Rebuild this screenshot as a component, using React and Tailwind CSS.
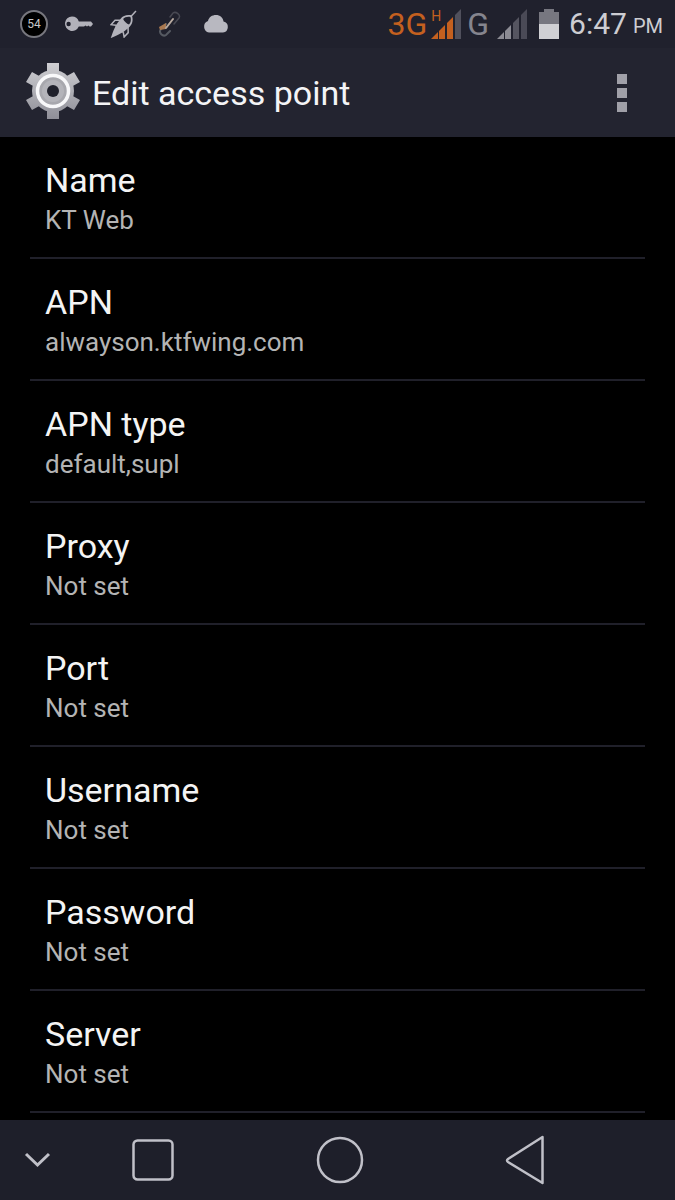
import React from "react";

const settings = [
  { name: "Name", value: "KT Web" },
  { name: "APN", value: "alwayson.ktfwing.com" },
  { name: "APN type", value: "default,supl" },
  { name: "Proxy", value: "Not set" },
  { name: "Port", value: "Not set" },
  { name: "Username", value: "Not set" },
  { name: "Password", value: "Not set" },
  { name: "Server", value: "Not set" },
];

function KeyIcon() {
  return (
    <svg width="30" height="18" viewBox="0 0 30 18" fill="#b2b2ba" aria-hidden="true">
      <path
        fillRule="evenodd"
        d="M8 1.500a7.200 7.200 0 0 1 6.800 5H27l2 2.500-2 2.500h-1.500l-1-1-1.500 1-1.500-1-1.500 1h-5.200A7.200 7.200 0 1 1 8 1.500zM4.600 6.800a2.200 2.200 0 1 0 0 4.400 2.200 2.200 0 0 0 0-4.400z"
      />
    </svg>
  );
}

function RocketIcon() {
  return (
    <svg width="28" height="28" viewBox="0 0 28 28" aria-hidden="true">
      <g transform="translate(13 15) rotate(43)">
        <path d="M0-19v8" stroke="#b2b2ba" strokeWidth="1.500" />
        <path
          fillRule="evenodd"
          fill="#b2b2ba"
          d="M0-13c4 2 6.500 6 6 10L5 6H-5L-6-3C-6.500-7-4-11 0-13zM0-11c-2.500 1.500-4.200 4-4 6.500 2 1 6 1 8 0C4.200-7 2.500-9.500 0-11z"
        />
        <path d="M-5-2l-4 4v6l4-3M5-2l4 4v6L5 5" fill="none" stroke="#b2b2ba" strokeWidth="1.500" />
        <path d="M-5 5H5L3 11 0 18l-3-7z" fill="#b2b2ba" />
      </g>
    </svg>
  );
}

function LinkIcon() {
  return (
    <svg width="24" height="26" viewBox="0 0 24 26" fill="none" strokeLinecap="round" aria-hidden="true">
      <path d="M12 6l3-4c3-2 8 2 6 5l-5 6" stroke="#484953" strokeWidth="1.500" />
      <path d="M8 13l-5 5c-3 4 2 8 5 6l4-4" stroke="#565a62" strokeWidth="2" />
      <path d="M8 12l-7 4 1 3 6-1z" fill="#a87850" />
      <path d="M8 17l7-9" stroke="#b8aaa0" strokeWidth="2" />
    </svg>
  );
}

function CloudIcon() {
  return (
    <svg width="28" height="20" viewBox="0 0 28 20" fill="#b8b8c0" aria-hidden="true">
      <path d="M7 18.500a6 6 0 0 1-1-11.500C7 3 10 1 14 1c4 0 7 2.500 7.500 6.500a5.600 5.600 0 0 1-.500 11z" />
    </svg>
  );
}

function SignalBars({ colors }) {
  return (
    <svg width="30" height="30" viewBox="0 0 30 30" aria-hidden="true">
      <path d="M0 30l7-7v7z" fill={colors[0]} />
      <path d="M8 22l6-6v14H8z" fill={colors[1]} />
      <path d="M16 14l6-6v22h-6z" fill={colors[2]} />
      <path d="M24 6l6-6v30h-6z" fill={colors[3]} />
    </svg>
  );
}

function BatteryIcon() {
  return (
    <svg width="20" height="30" viewBox="0 0 20 30" aria-hidden="true">
      <path d="M5 0h10v3h5v12H0V3h5z" fill="#777780" />
      <path d="M0 15h20v15H0z" fill="#d0d0d4" />
    </svg>
  );
}

function GearIcon() {
  return (
    <svg width="54" height="60" viewBox="-27 -28 54 60" aria-hidden="true">
      <defs>
        <linearGradient id="gear" x1="0" y1="-28" x2="0" y2="28" gradientUnits="userSpaceOnUse">
          <stop offset="0" stopColor="#cfcfd3" />
          <stop offset="1" stopColor="#8f8f98" />
        </linearGradient>
      </defs>
      <g fill="url(#gear)">
        <path d="M-6-28H6V-16H-6zM-6 28H6V16H-6z" />
        <path d="M-21-19l9 5-6 10-9-5zM21-19l-9 5 6 10 9-5z" />
        <path d="M-21 19l9-5-6-10-9 5zM21 19l-9-5 6-10 9 5z" />
        <circle r="21" />
      </g>
      <circle r="15.500" fill="#a8a8ae" stroke="#f8f8fa" strokeWidth="3.500" />
      <circle r="11" fill="#b4b4ba" />
      <circle r="6" fill="#20212c" />
    </svg>
  );
}

function StatusBar() {
  return (
    <div className="h-12 pl-5 pr-3 flex items-center justify-between bg-[#20212d]">
      <div className="flex items-center gap-4">
        <span className="size-7 rounded-full border-2 border-[#77777e] bg-black flex items-center justify-center text-xs text-[#c8c8cc]">
          54
        </span>
        <KeyIcon />
        <RocketIcon />
        <div className="px-1">
          <LinkIcon />
        </div>
        <CloudIcon />
      </div>
      <div className="flex items-center">
        <span className="text-[32px] leading-10 text-[#c4601f]">3G</span>
        <div className="relative pl-1">
          <span className="absolute left-1 top-0 text-sm leading-none text-[#c4601f]">H</span>
          <SignalBars colors={["#c4601f", "#c4601f", "#c4601f", "#50505c"]} />
        </div>
        <span className="pl-1.5 text-[32px] leading-10 text-[#85858e]">G</span>
        <div className="pl-2 pr-3">
          <SignalBars colors={["#8c8c94", "#8c8c94", "#555560", "#4a4a56"]} />
        </div>
        <BatteryIcon />
        <span className="pl-2.5 text-[30px] leading-10 text-[#cdcdd2]">6:47</span>
        <span className="pl-1.5 pt-1 text-xl text-[#cdcdd2]">PM</span>
      </div>
    </div>
  );
}

function ActionBar() {
  return (
    <header className="h-[89px] pl-[26px] pr-10 flex items-center justify-between bg-[#232430]">
      <div className="flex items-center gap-3">
        <GearIcon />
        <h1 className="text-[34px] leading-10 text-[#f4f4f6]">Edit access point</h1>
      </div>
      <button aria-label="More options" className="px-2 flex flex-col gap-1">
        <span className="size-[10px] bg-[#a0a0a8]" />
        <span className="size-[10px] bg-[#a0a0a8]" />
        <span className="size-[10px] bg-[#a0a0a8]" />
      </button>
    </header>
  );
}

function NavBar() {
  return (
    <nav className="mt-auto h-20 pl-6 pr-[130px] flex items-center bg-[#1e1f2a]">
      <button aria-label="Hide">
        <svg width="28" height="20" viewBox="0 0 28 20" fill="none" stroke="#c0c0c8" strokeWidth="3">
          <path d="M2 4l11.500 11L25 4" />
        </svg>
      </button>
      <div className="ml-20 flex-1 flex items-center justify-between">
        <button aria-label="Recent apps">
          <svg width="42" height="42" viewBox="0 0 42 42" fill="none" stroke="#c0c0c8" strokeWidth="2.500">
            <rect x="1.500" y="1.500" width="39" height="39" rx="4" />
          </svg>
        </button>
        <button aria-label="Home">
          <svg width="48" height="48" viewBox="0 0 48 48" fill="none" stroke="#c0c0c8" strokeWidth="2.500">
            <circle cx="24" cy="24" r="22" />
          </svg>
        </button>
        <button aria-label="Back">
          <svg width="40" height="50" viewBox="0 0 40 50" fill="none" stroke="#c0c0c8" strokeWidth="2.500" strokeLinejoin="round">
            <path d="M37.500 2v46L3 27q-2-1.500 0-3z" />
          </svg>
        </button>
      </div>
    </nav>
  );
}

export default function App() {
  return (
    <div className="w-full min-h-screen flex flex-col bg-black font-['Roboto',sans-serif]">
      <StatusBar />
      <ActionBar />
      <main className="px-[30px]">
        {settings.map((item) => (
          <button
            key={item.name}
            className="w-full px-[15px] pt-[23px] pb-[17px] flex flex-col items-start text-left border-b-2 border-[#20202a]"
          >
            <span className="text-[34px] leading-10 text-[#f4f4f4]">{item.name}</span>
            <span className="text-[26px] leading-10 text-[#b4b4b4]">{item.value}</span>
          </button>
        ))}
      </main>
      <NavBar />
    </div>
  );
}
